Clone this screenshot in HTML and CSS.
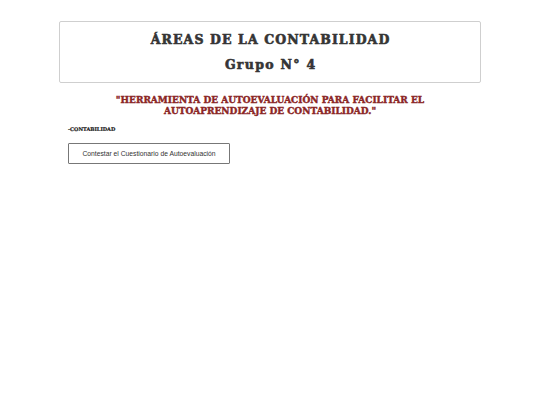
FILE: index.html
```html
<!DOCTYPE html>
<html lang="es">
<head>
<meta charset="utf-8">
<title>Áreas de la Contabilidad</title>
<link rel="stylesheet" href="styles.css">
</head>
<body>
<div class="page">
  <header class="banner">
    <h1 class="banner-title">ÁREAS DE LA CONTABILIDAD</h1>
    <h2 class="banner-sub">Grupo N° 4</h2>
  </header>
  <p class="quote">"HERRAMIENTA DE AUTOEVALUACIÓN PARA FACILITAR EL<br>AUTOAPRENDIZAJE DE CONTABILIDAD."</p>
  <p class="tag">-CONTABILIDAD</p>
  <button class="btn" type="button">Contestar el Cuestionario de Autoevaluación</button>
</div>
</body>
</html>
```
FILE: styles.css
```css
html, body {
  margin: 0;
  padding: 0;
  background: #ffffff;
}
.page {
  width: 422px;
  margin: 0 auto;
  padding-top: 21px;
  font-family: "DejaVu Serif", serif;
}
.banner {
  box-sizing: border-box;
  height: 62px;
  border: 1px solid #cfcfcf;
  border-radius: 2px;
  display: flex;
  flex-direction: column;
  align-items: center;
  justify-content: center;
  gap: 9px;
}
.banner-title, .banner-sub {
  margin: 0;
  font-weight: 700;
  color: #353535;
  font-size: 12.5px;
  line-height: 16px;
  -webkit-text-stroke: 0.6px #353535;
}
.banner-title {
  letter-spacing: 1.1px;
  padding-left: 1.1px;
}
.banner-sub {
  letter-spacing: 1.3px;
  padding-left: 1.3px;
}
.quote {
  margin: 12px 0 0 0;
  text-align: center;
  color: #8b2626;
  font-weight: 700;
  font-size: 9px;
  line-height: 11px;
  -webkit-text-stroke: 0.4px #8b2626;
}
.tag {
  margin: 8px 0 0 9px;
  font-weight: 700;
  color: #222222;
  font-size: 5px;
  line-height: 8px;
  -webkit-text-stroke: 0.2px #222222;
}
.btn {
  margin: 10px 0 0 9px;
  width: 162px;
  height: 21px;
  background: #ffffff;
  border: 1px solid #777777;
  border-radius: 1px;
  font-family: "Liberation Sans", Arial, sans-serif;
  font-size: 6.75px;
  color: #333333;
  padding: 0;
}
```
